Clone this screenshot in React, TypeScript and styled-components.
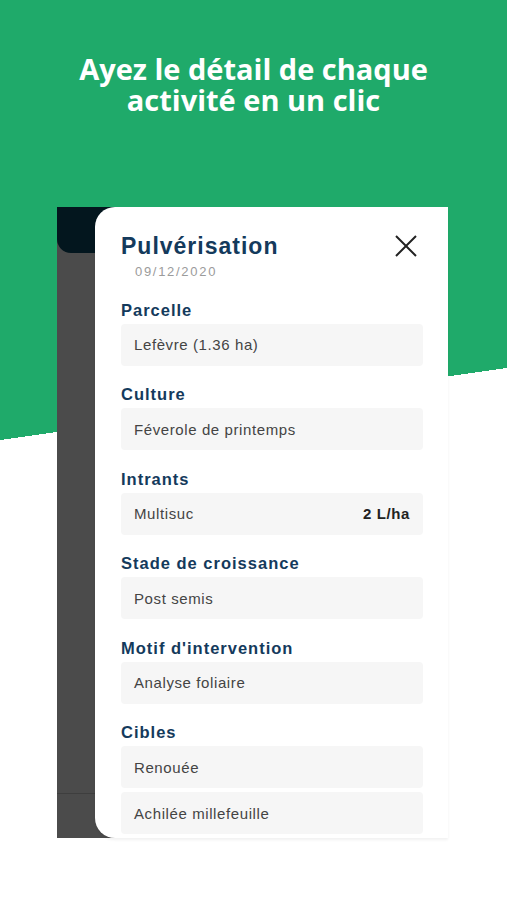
import styled, { createGlobalStyle } from "styled-components";

const GlobalStyle = createGlobalStyle`
  body {
    margin: 0;
    background: #ffffff;
    font-family: "Liberation Sans", Arial, sans-serif;
  }
`;

const GREEN = "#1faa6a";
const NAVY = "#143a5c";

const Page = styled.div`
  width: 507px;
  min-height: 900px;
  background:
    linear-gradient(${GREEN}, ${GREEN}) 0 0 / 100% 368px no-repeat,
    linear-gradient(to bottom right, ${GREEN} 50%, #ffffff 50%) 0 368px / 100% 72px no-repeat,
    #ffffff;
  overflow: hidden;
`;

const Hero = styled.header`
  padding: 53px 10px 0;
  height: 154px;
`;

const Headline = styled.h1`
  margin: 0;
  text-align: center;
  color: #ffffff;
  font-family: "Open Sans", Lato, sans-serif;
  font-weight: 700;
  font-size: 29px;
  line-height: 31px;
`;

const Mock = styled.div`
  display: flex;
  width: 391px;
  height: 631px;
  margin-left: 57px;
  background: linear-gradient(#03161e 46px, #4b4b4b 46px);
`;

const Strip = styled.div`
  display: flex;
  flex-direction: column;
  width: 38px;
  background: #4b4b4b;
`;

const DarkBar = styled.div`
  height: 46px;
  background: #03161e;
  border-bottom-left-radius: 14px;
`;

const Filler = styled.div`
  flex: 1;
`;

const StripFoot = styled.div`
  height: 44px;
  border-top: 1px solid #3e3e3e;
`;

const Sheet = styled.section`
  flex: 1;
  background: #ffffff;
  border-radius: 20px 0 0 20px;
  padding: 25px 25px 0 26px;
  overflow: hidden;
  box-shadow: 0 2px 3px rgba(0, 0, 0, 0.06);
`;

const TitleRow = styled.div`
  display: flex;
  align-items: center;
  justify-content: space-between;
`;

const Title = styled.h2`
  margin: 0;
  color: ${NAVY};
  font-size: 23px;
  line-height: 28px;
  font-weight: 700;
  letter-spacing: 1px;
`;

const Close = styled.button`
  display: flex;
  border: 0;
  padding: 0;
  margin-right: 6px;
  background: none;
`;

const DateText = styled.div`
  margin: 3px 0 0 14px;
  color: #9b9b9b;
  font-size: 13px;
  line-height: 18px;
  letter-spacing: 1.7px;
`;

const Label = styled.h3`
  margin: 18.5px 0 4px;
  color: ${NAVY};
  font-size: 16.5px;
  line-height: 20px;
  font-weight: 700;
  letter-spacing: 1px;
`;

const Box = styled.div`
  display: flex;
  align-items: center;
  justify-content: space-between;
  height: 42px;
  padding: 0 13px;
  background: #f6f6f6;
  border-radius: 4px;
  color: #444444;
  font-size: 15px;
  letter-spacing: 0.6px;
  & + & {
    margin-top: 4px;
  }
`;

const Amount = styled.span`
  color: #222222;
  font-weight: 700;
`;

interface IField {
  label: string;
  values: { text: string; amount?: string }[];
}

const fields: IField[] = [
  { label: "Parcelle", values: [{ text: "Lefèvre (1.36 ha)" }] },
  { label: "Culture", values: [{ text: "Féverole de printemps" }] },
  { label: "Intrants", values: [{ text: "Multisuc", amount: "2 L/ha" }] },
  { label: "Stade de croissance", values: [{ text: "Post semis" }] },
  { label: "Motif d'intervention", values: [{ text: "Analyse foliaire" }] },
  {
    label: "Cibles",
    values: [{ text: "Renouée" }, { text: "Achilée millefeuille" }],
  },
];

export default function App() {
  return (
    <Page>
      <GlobalStyle />
      <Hero>
        <Headline>
          Ayez le détail de chaque
          <br />
          activité en un clic
        </Headline>
      </Hero>

      <Mock>
        <Strip>
          <DarkBar />
          <Filler />
          <StripFoot />
        </Strip>
        <Sheet>
          <TitleRow>
            <Title>Pulvérisation</Title>
            <Close aria-label="Fermer">
              <svg width="22" height="22" viewBox="0 0 22 22">
                <path
                  d="M1 1L21 21M21 1L1 21"
                  stroke="#222"
                  strokeWidth="2"
                  fill="none"
                />
              </svg>
            </Close>
          </TitleRow>
          <DateText>09/12/2020</DateText>

          {fields.map((field) => (
            <div key={field.label}>
              <Label>{field.label}</Label>
              {field.values.map((v) => (
                <Box key={v.text}>
                  <span>{v.text}</span>
                  {v.amount && <Amount>{v.amount}</Amount>}
                </Box>
              ))}
            </div>
          ))}
        </Sheet>
      </Mock>
    </Page>
  );
}
